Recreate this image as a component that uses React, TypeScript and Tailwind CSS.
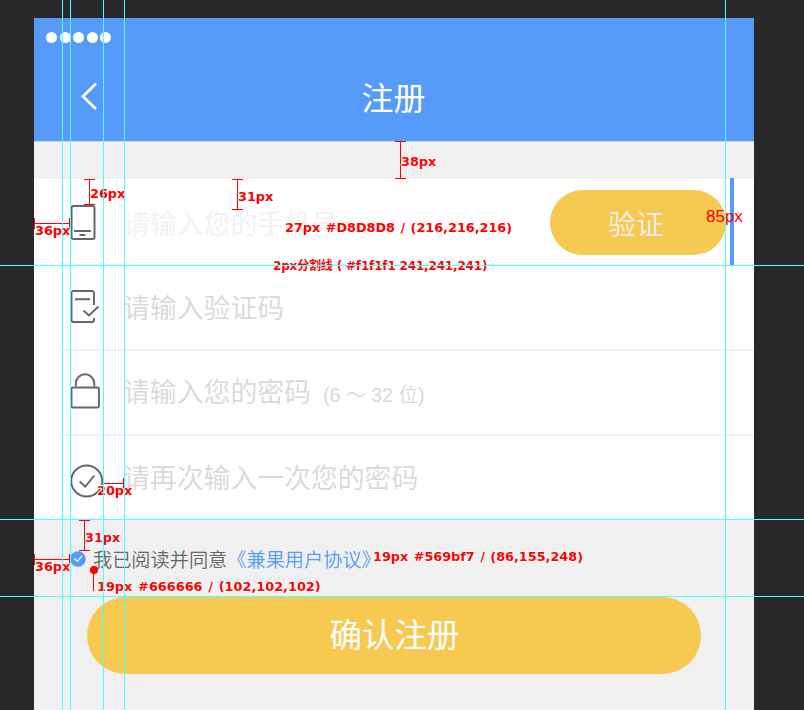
import type { ReactNode } from 'react';

const cjk = "font-['Noto_Sans_CJK_SC',sans-serif] font-[350]";
const noteText =
  "whitespace-nowrap font-['DejaVu_Sans','Noto_Sans_CJK_SC',sans-serif] font-bold leading-[14px] text-[#f00] [text-shadow:1px_0_#fff,-1px_0_#fff,0_1px_#fff,0_-1px_#fff]";

function PhoneIcon() {
  return (
    <svg width="34" height="36" viewBox="0 0 34 36" fill="none" stroke="#666" strokeWidth="2">
      <rect x="1.5" y="1" width="23" height="33" rx="2" />
      <path d="M4 26H21M9.500 30H15.500" />
    </svg>
  );
}

function FormIcon() {
  return (
    <svg width="34" height="34" viewBox="0 0 34 34" fill="none" stroke="#666" strokeWidth="1.900">
      <path d="M24 15V3a2 2 0 0 0-2-2H3.500a2 2 0 0 0-2 2V30a2 2 0 0 0 2 2H22a2 2 0 0 0 2-2V28" />
      <path d="M5 9.300H20M13.500 20.500L19 25.500L28.500 16.500" />
    </svg>
  );
}

function LockIcon() {
  return (
    <svg width="34" height="36" viewBox="0 0 34 36" fill="none" stroke="#666" strokeWidth="1.900">
      <path d="M5.800 13.500V10.500a9.250 9.250 0 0 1 18.500 0V13.500" />
      <rect x="1.500" y="14.500" width="27.500" height="20" rx="1.500" />
    </svg>
  );
}

function CheckIcon() {
  return (
    <svg width="34" height="34" viewBox="0 0 34 34" fill="none" stroke="#666" strokeWidth="1.900">
      <circle cx="16.700" cy="17" r="15.500" />
      <path d="M9.700 17.500L15.300 22.700L24.300 11.500" />
    </svg>
  );
}

function Row({ icon, children, className, action }: { icon: ReactNode; children: ReactNode; className: string; action?: ReactNode }) {
  return (
    <div className={`ml-7 flex items-center pl-2 ${className}`}>
      <div className="w-[53px] shrink-0">{icon}</div>
      <div className={`flex-1 whitespace-nowrap text-[26.850px] leading-[40px] ${cjk}`}>{children}</div>
      {action}
    </div>
  );
}

function Note({ className, children }: { className: string; children: ReactNode }) {
  return <span className={`absolute ${noteText} ${className}`}>{children}</span>;
}

/* Vertical dimension line with its label to the right */
function VMeasure({ className, label }: { className: string; label: string }) {
  return (
    <div className={`absolute flex items-center ${className}`}>
      <div className="flex h-full w-[11px] justify-center border-y border-[#f00]">
        <div className="w-px bg-[#f00]" />
      </div>
      <span className={`-ml-[5px] pt-1 text-[12.800px] ${noteText}`}>{label}</span>
    </div>
  );
}

/* Horizontal dimension line with its label underneath */
function HMeasure({ className, label, labelClass }: { className: string; label: string; labelClass: string }) {
  return (
    <div className={`absolute flex flex-col ${className}`}>
      <div className="flex h-[11px] items-center border-x border-[#f00]">
        <div className="h-px w-full bg-[#f00]" />
      </div>
      <span className={`text-[12.800px] ${noteText} ${labelClass}`}>{label}</span>
    </div>
  );
}

export default function App() {
  return (
    <div className="relative h-[710px] w-[804px] overflow-hidden bg-[#282828] pl-[34px] pt-[18px]">
      <main className="flex h-[692px] w-[720px] flex-col bg-[#f0f0f0]">
        <header className="h-[124px] border-b border-[#d0d4dc] bg-[#569bf9]">
          <div className="flex gap-[2.500px] pl-3 pt-[14px]">
            {[0, 1, 2, 3, 4].map((i) => (
              <span key={i} className="size-[11px] rounded-full bg-white" />
            ))}
          </div>
          <div className="mt-[27px] grid h-[52px] grid-cols-[1fr_auto_1fr] items-center pr-px">
            <svg className="ml-[46px]" width="20" height="28" viewBox="0 0 20 28" fill="none" stroke="white" strokeWidth="2.800">
              <path d="M16 1.500L3 14.500L16 27" />
            </svg>
            <h1 className="font-['Noto_Sans_CJK_SC',sans-serif] text-[32px] font-normal leading-[48px] text-white">注册</h1>
          </div>
        </header>
        <form className="mt-[37px] flex h-[340px] flex-col bg-white text-[#d8d8d8]">
          <Row
            className="h-[87px] border-b-2 border-[#f1f1f1] pt-[2px] text-[#f1f1f1]"
            icon={<PhoneIcon />}
            action={
              <button type="button" className={`mr-7 h-[65px] w-[176px] rounded-full bg-[#f6c951] pr-1 text-[28px] leading-[40px] text-[#f1f1f1] ${cjk}`}>
                验证
              </button>
            }
          >
            请输入您的手机号
          </Row>
          <Row className="h-[85px] border-b-2 border-[#f1f1f1] pb-px" icon={<FormIcon />}>请输入验证码</Row>
          <Row className="h-[85px] border-b-2 border-[#f1f1f1]" icon={<div className="pb-[3px]"><LockIcon /></div>}>
            请输入您的密码
            <span className="ml-3 font-['Liberation_Sans','Noto_Sans_CJK_SC',sans-serif] text-[19.700px]">(6 ～ 32 位)</span>
          </Row>
          <Row className="h-[83px] pb-px" icon={<div className="pt-2"><CheckIcon /></div>}>请再次输入一次您的密码</Row>
        </form>
        <div className={`ml-9 mt-[25px] flex h-[30px] items-center text-[19.200px] leading-[30px] text-[#666] ${cjk}`}>
          <svg className="mr-[7px]" width="16" height="16" viewBox="0 0 16 16">
            <circle cx="8" cy="8" r="7.800" fill="#569bf7" />
            <path d="M4.500 7.500L7.300 10.300L12 5" fill="none" stroke="white" strokeWidth="1.200" />
          </svg>
          <span>我已阅读并同意</span>
          <span className="text-[#569bf7]">《兼果用户协议》</span>
        </div>
        <button type="button" className="ml-[53px] mt-[23px] h-[77px] w-[614px] rounded-full bg-[#f6c951] pb-[5px] pl-px font-['Noto_Sans_CJK_SC',sans-serif] text-[32.500px] leading-[48px] text-white">
          确认注册
        </button>
      </main>

      {/* Spec annotations laid over the design */}
      <div className="pointer-events-none absolute inset-0">
        <div className="absolute left-[730px] top-[178px] h-[87px] w-1 bg-[#569bf9]" />
        <VMeasure className="left-[395px] top-[141px] h-[38px]" label="38px" />
        <VMeasure className="left-[84px] top-[179px] h-[26px]" label="26px" />
        <VMeasure className="left-[232px] top-[179px] h-[31px]" label="31px" />
        <VMeasure className="left-[79px] top-[520px] h-[31px]" label="31px" />
        <HMeasure className="left-[34px] top-[218px] w-9" label="36px" labelClass="-mt-[5px] ml-px" />
        <HMeasure className="left-[34px] top-[554px] w-9" label="36px" labelClass="-mt-[5px] ml-px" />
        <HMeasure className="left-[103px] top-[478px] w-[21px]" label="20px" labelClass="-mt-[5px] -ml-1.5" />
        <div className="absolute left-[90px] top-[566px] flex w-2 flex-col items-center">
          <div className="size-2 rounded-full bg-[#f00]" />
          <div className="-mt-1 -ml-px h-[21px] w-px bg-[#f00]" />
        </div>
        <Note className="left-[285px] top-[221px] text-[12.800px] [word-spacing:1px]">27px #D8D8D8 / (216,216,216)</Note>
        <Note className="left-[273px] top-[259px] text-[12px] tracking-[-0.170px]">2px分割线 ( #f1f1f1  241,241,241)</Note>
        <Note className="left-[373px] top-[550px] text-[12.800px] [word-spacing:1px]">19px #569bf7 / (86,155,248)</Note>
        <Note className="left-[97px] top-[580px] text-[12.850px] [word-spacing:1.300px]">19px #666666 / (102,102,102)</Note>
        <span className="absolute left-[706px] top-[207px] font-['Liberation_Sans',sans-serif] text-[17px] leading-[20px] text-[#f00]">85px</span>
        <div className="absolute inset-y-0 left-[62px] w-px bg-[#4cffff]" />
        <div className="absolute inset-y-0 left-[70px] w-px bg-[#4cffff]" />
        <div className="absolute inset-y-0 left-[103px] w-px bg-[#4cffff]" />
        <div className="absolute inset-y-0 left-[124px] w-px bg-[#4cffff]" />
        <div className="absolute inset-y-0 left-[725px] w-px bg-[#4cffff]" />
        <div className="absolute inset-x-0 top-[265px] h-px bg-[#4cffff]" />
        <div className="absolute inset-x-0 top-[519px] h-px bg-[#4cffff]" />
        <div className="absolute inset-x-0 top-[596px] h-px bg-[#4cffff]" />
      </div>
    </div>
  );
}
